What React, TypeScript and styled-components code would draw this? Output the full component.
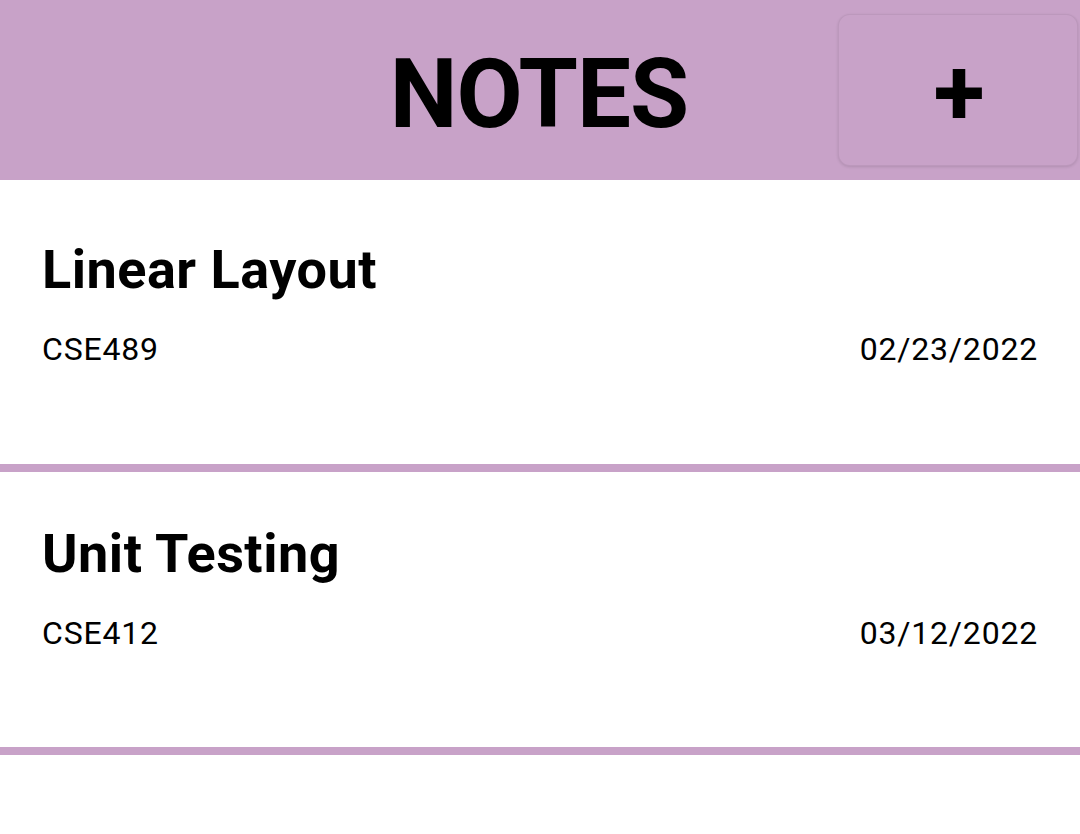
import React from "react";
import styled, { createGlobalStyle } from "styled-components";

const GlobalStyle = createGlobalStyle`
  html, body {
    margin: 0;
    padding: 0;
    background: #ffffff;
    font-family: Roboto, "Liberation Sans", Arial, sans-serif;
  }
  * { box-sizing: border-box; }
`;

const LILAC = "#c8a2c8";

const Page = styled.div`
  width: 1080px;
  min-height: 834px;
  background: #ffffff;
`;

const Header = styled.header`
  height: 180px;
  background: ${LILAC};
  display: grid;
  grid-template-columns: 1fr auto 1fr;
  align-items: center;
  padding-right: 2px;
`;

const Title = styled.h1`
  grid-column: 2;
  margin: 0;
  font-family: Roboto, sans-serif;
  font-weight: 700;
  font-size: 96px;
  letter-spacing: -1px;
  line-height: 1;
  color: #000;
  padding-top: 8px;
`;

const AddButton = styled.button`
  grid-column: 3;
  justify-self: end;
  width: 240px;
  height: 152px;
  border: 1px solid rgba(0, 0, 0, 0.06);
  border-radius: 12px;
  background: ${LILAC};
  box-shadow: 0 1px 3px rgba(0, 0, 0, 0.12);
  display: flex;
  align-items: center;
  justify-content: center;
  font-family: Roboto, sans-serif;
  font-weight: 700;
  font-size: 94px;
  line-height: 1;
  color: #000;
  padding: 6px 0 0 2px;
  cursor: pointer;
`;

const List = styled.ul`
  list-style: none;
  margin: 0;
  padding: 8px 0 0;
`;

const Item = styled.li`
  height: 283px;
  padding: 51px 42px 0;
  border-bottom: 8px solid ${LILAC};
  &:first-child {
    height: 284px;
  }
`;

const ItemTitle = styled.h2`
  margin: 0;
  font-family: Roboto, sans-serif;
  font-weight: 700;
  font-size: 54px;
  letter-spacing: 0.5px;
  line-height: 62px;
  color: #000;
`;

const Meta = styled.div`
  margin-top: 29px;
  display: flex;
  justify-content: space-between;
  font-family: Roboto, sans-serif;
  font-weight: 400;
  font-size: 32px;
  letter-spacing: 0.8px;
  line-height: 38px;
  color: #000;
`;

const notes = [
  { title: "Linear Layout", course: "CSE489", date: "02/23/2022" },
  { title: "Unit Testing", course: "CSE412", date: "03/12/2022" },
];

export default function App() {
  return (
    <Page>
      <GlobalStyle />
      <Header>
        <Title>NOTES</Title>
        <AddButton aria-label="Add note">+</AddButton>
      </Header>
      <List>
        {notes.map((n) => (
          <Item key={n.title}>
            <ItemTitle>{n.title}</ItemTitle>
            <Meta>
              <span>{n.course}</span>
              <span>{n.date}</span>
            </Meta>
          </Item>
        ))}
      </List>
    </Page>
  );
}
